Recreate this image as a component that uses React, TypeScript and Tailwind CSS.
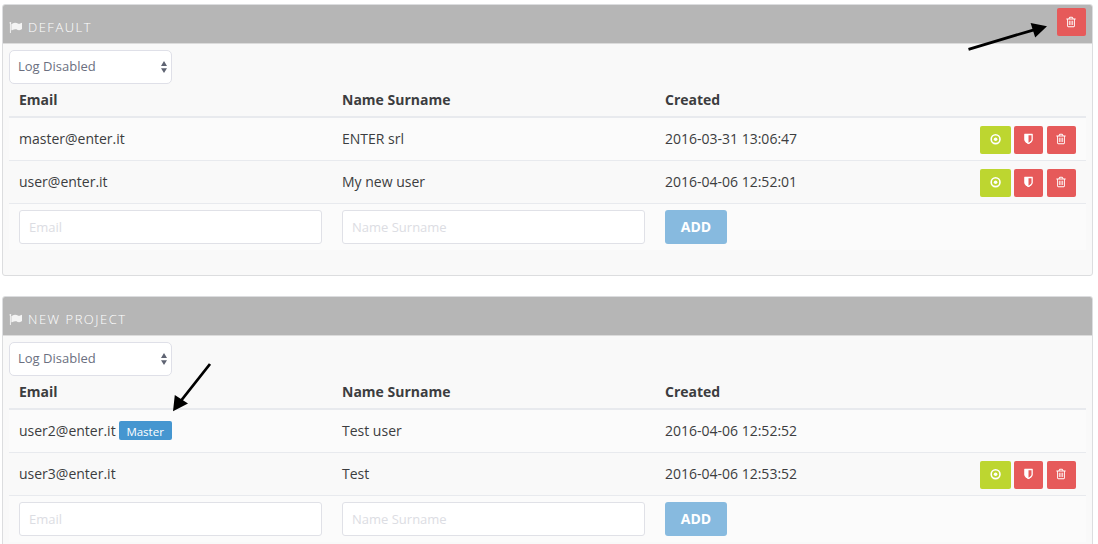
import React from "react";

type User = { email: string; name: string; created: string; master?: boolean };

function FlagIcon() {
  return (
    <svg viewBox="0 0 1792 1792" className="mt-px h-[13px] w-[13px] shrink-0 fill-[#f4f4f4]">
      <path d="M320 256q0 72-64 110v1266q0 13-9.5 22.5t-22.5 9.5h-64q-13 0-22.5-9.5t-9.5-22.5v-1266q-64-38-64-110 0-53 37.5-90.5t90.5-37.5 90.5 37.5 37.5 90.5zm1472 64v763q0 25-12.5 38.5t-39.5 27.5q-215 116-369 116-61 0-123.5-22t-108.5-48-115.5-48-142.5-22q-192 0-464 146-17 9-33 9-26 0-45-19t-19-45v-742q0-32 31-55 21-14 79-43 236-120 421-120 107 0 200 29t219 88q38 19 88 19 54 0 117.5-21t110-47 88-47 54.5-21q26 0 45 19t19 45z" />
    </svg>
  );
}

function TrashIcon() {
  return (
    <svg viewBox="0 0 1792 1792" className="mr-px h-3 w-3 fill-current">
      <path d="M704 736v576q0 14-9 23t-23 9h-64q-14 0-23-9t-9-23v-576q0-14 9-23t23-9h64q14 0 23 9t9 23zm256 0v576q0 14-9 23t-23 9h-64q-14 0-23-9t-9-23v-576q0-14 9-23t23-9h64q14 0 23 9t9 23zm256 0v576q0 14-9 23t-23 9h-64q-14 0-23-9t-9-23v-576q0-14 9-23t23-9h64q14 0 23 9t9 23zm128 724v-948h-896v948q0 22 7 40.5t14.5 27 10.5 8.5h832q3 0 10.5-8.5t14.5-27 7-40.5zm-672-1076h448l-48-117q-7-9-17-11h-317q-10 2-17 11zm928 32v64q0 14-9 23t-23 9h-96v948q0 83-47 143.5t-113 60.5h-832q-66 0-113-58.5t-47-141.5v-952h-96q-14 0-23-9t-9-23v-64q0-14 9-23t23-9h309l70-167q15-37 54-63t79-26h320q40 0 79 26t54 63l70 167h309q14 0 23 9t9 23z" />
    </svg>
  );
}

function ShieldIcon() {
  return (
    <svg viewBox="-75 0 1792 1792" className="mr-px h-3 w-3 fill-current">
      <path d="M1344 960v-640h-448v1137q119-63 213-137 235-184 235-360zm192-768v768q0 86-33.5 170.5t-83 150-118 127.5-126.5 103-121 77.5-89.5 49.5-42.5 20q-12 6-26 6t-26-6q-16-7-42.5-20t-89.5-49.5-121-77.5-126.5-103-118-127.5-83-150-33.5-170.5v-768q0-26 19-45t45-19h1152q26 0 45 19t19 45z" />
    </svg>
  );
}

function DotCircleIcon() {
  return (
    <svg viewBox="0 0 12 12" className="mr-px h-3 w-3">
      <circle cx="6.6" cy="6.2" r="4.4" fill="none" stroke="currentColor" strokeWidth="1.6" />
      <circle cx="6.6" cy="6.2" r="1.8" fill="currentColor" />
    </svg>
  );
}

function DeleteButton() {
  return (
    <button className="flex h-7 w-[29px] items-center justify-center rounded-[2px] bg-[#e65a5a] pb-px text-white">
      <TrashIcon />
    </button>
  );
}

function RowActions() {
  return (
    <div className="flex pt-px">
      <button className="mr-[3px] flex h-7 w-[31px] items-center justify-center rounded-[2px] bg-[#bdd630] pb-px text-white">
        <DotCircleIcon />
      </button>
      <button className="mr-1 flex h-7 w-[29px] items-center justify-center rounded-[2px] bg-[#e65a5a] pb-px text-white">
        <ShieldIcon />
      </button>
      <DeleteButton />
    </div>
  );
}

const GRID = "grid grid-cols-[323px_323px_1fr_auto] items-center px-[10px]";
const INPUT =
  "block h-[34px] w-[303px] rounded-[3px] border border-[#e0e1e7] bg-white px-[9px] text-[13px] placeholder:text-[#dcdde3] placeholder:opacity-100 outline-none";

function Panel({ title, users, deletable }: { title: string; users: User[]; deletable?: boolean }) {
  return (
    <section className="h-[272px] w-[1091px] shrink-0 rounded-[3px] border border-[#dcdddf] bg-[#f9f9f9]">
      <header className="flex h-[39px] items-start justify-between rounded-t-[2px] border-b border-[#dcdcdc] bg-[#b6b6b6] px-[6px] text-white">
        <h2 className="flex items-center gap-[6px] pt-3 text-[13px] leading-5 font-light tracking-[1.5px] uppercase">
          <FlagIcon />
          {title}
        </h2>
        {deletable && (
          <div className="pt-[3px]">
            <DeleteButton />
          </div>
        )}
      </header>
      <div className="px-[6px] pt-[6px]">
        <div className="relative w-[163px]">
          <select className="block h-[34px] w-full appearance-none rounded-[5px] border border-[#dfe0e8] bg-white pl-2 text-[13px] text-[#6b6f80] outline-none">
            <option>Log Disabled</option>
          </select>
          <svg viewBox="0 0 6 12" className="pointer-events-none absolute top-[11px] right-[5px] h-3 w-[6px] fill-[#5f6473]">
            <path d="M3 0L6 5H0zM3 12L0 7.2H6z" />
          </svg>
        </div>
        <div className="text-[14px] text-[#3c3d40]">
          <div className={`${GRID} h-[34px] border-b-2 border-[#e8eaee] pb-[2px] font-bold`}>
            <span>Email</span>
            <span>Name Surname</span>
            <span>Created</span>
          </div>
          {users.map((user, i) => (
            <div
              key={user.email}
              className={`${GRID} h-[43px] border-b border-[#e8eaee] ${i % 2 === 0 ? "bg-[#fbfbfb]" : "bg-[#f9f9f9]"}`}
            >
              <div className="flex items-center pb-[2px]">
                <span>{user.email}</span>
                {user.master && (
                  <span className="ml-[3px] flex h-[19px] w-[53px] items-center justify-center rounded-[2px] bg-[#4596d0] pt-[3px] text-[11.5px] text-white">
                    Master
                  </span>
                )}
              </div>
              <span className="pb-[2px]">{user.name}</span>
              <span className="pb-[2px]">{user.created}</span>
              {!user.master && <RowActions />}
            </div>
          ))}
          <div className={`${GRID} h-[46px] bg-[#fbfbfb]`}>
            <input className={INPUT} placeholder="Email" />
            <input className={INPUT} placeholder="Name Surname" />
            <button className="h-[34px] w-[62px] rounded-[3px] bg-[#87badf] pb-[2px] text-[14px] font-bold text-white">
              ADD
            </button>
          </div>
        </div>
      </div>
    </section>
  );
}

export default function App() {
  return (
    <main className="relative flex h-[544px] w-[1098px] flex-col gap-5 overflow-hidden bg-white pt-1 pl-[2px] font-['Open_Sans',sans-serif]">
      <Panel
        title="Default"
        deletable
        users={[
          { email: "master@enter.it", name: "ENTER srl", created: "2016-03-31 13:06:47" },
          { email: "user@enter.it", name: "My new user", created: "2016-04-06 12:52:01" },
        ]}
      />
      <Panel
        title="New Project"
        users={[
          { email: "user2@enter.it", name: "Test user", created: "2016-04-06 12:52:52", master: true },
          { email: "user3@enter.it", name: "Test", created: "2016-04-06 12:53:52" },
        ]}
      />
      <svg viewBox="0 0 1098 544" className="pointer-events-none absolute inset-0 h-[544px] w-[1098px]">
        <path d="M968.5 49.3L1034 29.8M210 364L180 402" stroke="#000" strokeWidth="2.8" />
        <path d="M1047 26.2L1030.6 23L1035.2 37.4ZM173 411.3L174.8 395L188 403.6Z" />
      </svg>
    </main>
  );
}
